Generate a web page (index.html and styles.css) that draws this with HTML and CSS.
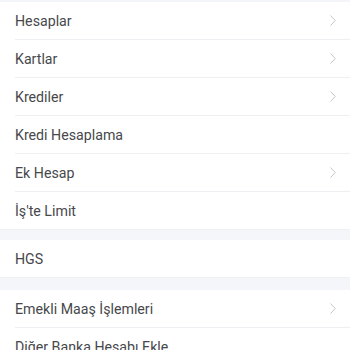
FILE: index.html
```html
<!DOCTYPE html>
<html lang="tr">
<head>
<meta charset="utf-8">
<link rel="stylesheet" href="styles.css">
</head>
<body>
<div class="page">
  <div class="top-gap"></div>
  <ul class="group">
    <li class="row"><span class="label">Hesaplar</span><svg class="chev" viewBox="0 0 6 11"><path d="M0.5 0.5 L5.3 5.5 L0.5 10.5"/></svg></li>
    <li class="row"><span class="label">Kartlar</span><svg class="chev" viewBox="0 0 6 11"><path d="M0.5 0.5 L5.3 5.5 L0.5 10.5"/></svg></li>
    <li class="row"><span class="label">Krediler</span><svg class="chev" viewBox="0 0 6 11"><path d="M0.5 0.5 L5.3 5.5 L0.5 10.5"/></svg></li>
    <li class="row"><span class="label">Kredi Hesaplama</span></li>
    <li class="row"><span class="label">Ek Hesap</span><svg class="chev" viewBox="0 0 6 11"><path d="M0.5 0.5 L5.3 5.5 L0.5 10.5"/></svg></li>
    <li class="row"><span class="label">İş'te Limit</span></li>
  </ul>
  <div class="gap"></div>
  <ul class="group">
    <li class="row"><span class="label">HGS</span></li>
  </ul>
  <div class="gap gap-wide"></div>
  <ul class="group">
    <li class="row"><span class="label">Emekli Maaş İşlemleri</span><svg class="chev" viewBox="0 0 6 11"><path d="M0.5 0.5 L5.3 5.5 L0.5 10.5"/></svg></li>
    <li class="row"><span class="label">Diğer Banka Hesabı Ekle</span></li>
  </ul>
</div>
</body>
</html>
```
FILE: styles.css
```css
html, body {
  margin: 0;
  padding: 0;
  background: #ffffff;
}
.page {
  width: 350px;
  font-family: Roboto, "Noto Sans", sans-serif;
}
.top-gap {
  height: 2px;
  background: #f4f5f8;
}
.gap {
  height: 10px;
  background: #f5f6f9;
  border-top: 1px solid #eef0f3;
}
.gap-wide {
  height: 12px;
}
.group {
  list-style: none;
  margin: 0;
  padding: 0;
  background: #ffffff;
}
.row {
  position: relative;
  display: flex;
  align-items: center;
  justify-content: space-between;
  height: 37px;
  padding: 0 14px 0 15px;
}
.row + .row::before {
  content: "";
  position: absolute;
  top: -1px;
  left: 15px;
  right: 0;
  height: 1px;
  background: #eeeff2;
}
.row + .row {
  margin-top: 1px;
}
.label {
  font-size: 14.2px;
  color: #47484b;
  letter-spacing: 0;
}
.chev {
  width: 6px;
  height: 11px;
  fill: none;
  stroke: #c6c7ca;
  stroke-width: 1;
}
```
